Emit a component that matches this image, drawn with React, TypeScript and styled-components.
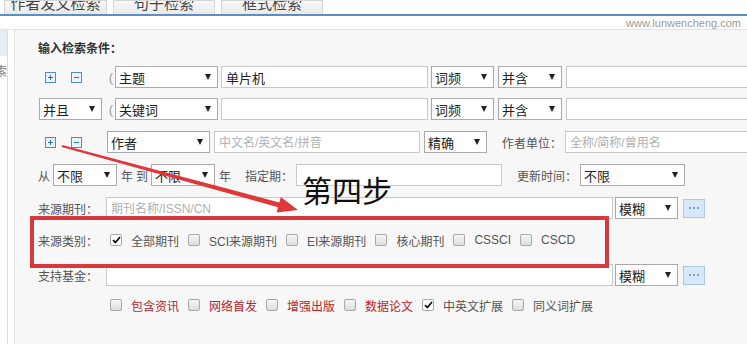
import React from 'react';
import styled, { createGlobalStyle } from 'styled-components';

const GlobalStyle = createGlobalStyle`
  html, body {
    margin: 0;
    padding: 0;
    background: #fff;
  }
  body {
    width: 747px;
    height: 344px;
    overflow: hidden;
    font-family: "Liberation Sans", "Noto Sans CJK SC", sans-serif;
    font-size: 12px;
    color: #555;
  }
`;

const Page = styled.div`
  position: relative;
  width: 747px;
  height: 344px;
  overflow: hidden;
  display: flex;
  flex-direction: column;
`;

const TabBar = styled.div`
  display: flex;
  gap: 6px;
  padding-left: 4px;
  height: 14px;
  border-bottom: 2px solid #5b8ec4;
`;

const Tab = styled.div<{ $w: number }>`
  width: ${p => p.$w}px;
  height: 14px;
  box-sizing: border-box;
  overflow: hidden;
  display: flex;
  align-items: flex-end;
  justify-content: center;
  background: linear-gradient(#f8f8f8, #e9e9e9);
  border: 1px solid #d6d6d6;
  border-bottom: none;
`;

const TabLabel = styled.span`
  font-size: 15px;
  line-height: 20px;
  color: #444;
  margin-bottom: 0;
  white-space: nowrap;
`;

const Strip = styled.div`
  height: 13px;
  border-bottom: 1px solid #e2e2e2;
  display: flex;
  justify-content: flex-end;
  align-items: center;
  padding-right: 6px;
  font-size: 11px;
  color: #9a9a9a;
`;

const Body = styled.div`
  flex: 1;
  display: flex;
  min-height: 0;
`;

const Sidebar = styled.div`
  width: 7px;
  border-right: 1px solid #d9dee5;
  overflow: hidden;
  display: flex;
  flex-direction: column;
`;

const SideHead = styled.div`
  height: 26px;
  background: #e8eef6;
`;

const SideText = styled.div`
  margin-top: 10px;
  line-height: 12px;
  display: flex;
  justify-content: flex-end;
  white-space: nowrap;
  color: #777;
`;

const Panel = styled.div`
  flex: 1;
  margin-left: 6px;
  background: #f7f7f7;
  border-left: 1px solid #e3e3e3;
  padding: 8px 0 0 23px;
  overflow: hidden;
`;

const Row = styled.div<{ $mt: number }>`
  display: flex;
  align-items: center;
  height: 22px;
  margin-top: ${p => p.$mt}px;
  white-space: nowrap;
`;

const Title = styled.div`
  font-weight: bold;
  color: #333;
  line-height: 22px;
  height: 22px;
`;

const Text = styled.span<{ $ml?: number; $w?: number }>`
  flex-shrink: 0;
  margin-left: ${p => p.$ml ?? 0}px;
  ${p => (p.$w ? `width: ${p.$w}px;` : '')}
  color: #555;
  font-size: 12px;
`;

const Paren = styled.span<{ $ml: number }>`
  flex-shrink: 0;
  width: 8px;
  margin-left: ${p => p.$ml}px;
  text-align: center;
  font-size: 13px;
  color: #999;
`;

const SelectBox = styled.div<{ $w: number; $ml?: number }>`
  flex-shrink: 0;
  box-sizing: border-box;
  width: ${p => p.$w}px;
  height: 22px;
  margin-left: ${p => p.$ml ?? 0}px;
  border: 1px solid #a9a9a9;
  background: #fff;
  display: flex;
  align-items: center;
  padding: 0 6px 0 3px;
  font-size: 13px;
  color: #222;
`;

const Caret = styled.span`
  margin-left: auto;
  width: 0;
  height: 0;
  border-left: 3px solid transparent;
  border-right: 3px solid transparent;
  border-top: 6px solid #222;
`;

const TextInput = styled.input<{ $w: number; $ml?: number }>`
  flex-shrink: 0;
  box-sizing: border-box;
  width: ${p => p.$w}px;
  height: 22px;
  margin: 0 0 0 ${p => p.$ml ?? 0}px;
  border: 1px solid #c9c9c9;
  background: #fff;
  padding: 0 4px;
  font-family: inherit;
  font-size: 13px;
  color: #222;
  outline: none;

  &::placeholder {
    font-size: 12px;
    color: #b0b0b0;
  }
`;

const MoreButton = styled.button<{ $ml: number }>`
  flex-shrink: 0;
  box-sizing: border-box;
  width: 22px;
  height: 19px;
  margin-left: ${p => p.$ml}px;
  padding: 0;
  border: 1px solid #a9c9e8;
  background: #d6e8f9;
  display: flex;
  align-items: center;
  justify-content: center;
  gap: 2px;
`;

const Dot = styled.span`
  width: 2px;
  height: 2px;
  background: #77a6d4;
`;

const IconButton = styled.span<{ $ml: number }>`
  flex-shrink: 0;
  display: inline-flex;
  margin-left: ${p => p.$ml}px;
`;

const CheckGroup = styled.div<{ $ml: number }>`
  display: flex;
  align-items: center;
  gap: 9px;
  margin-left: ${p => p.$ml}px;
`;

const CheckItem = styled.label`
  display: flex;
  align-items: center;
  gap: 9px;
`;

const Box = styled.span<{ $checked?: boolean }>`
  box-sizing: border-box;
  width: 12px;
  height: 12px;
  border: 1px solid #a8a8a8;
  border-radius: 2px;
  background: ${p => (p.$checked ? '#fff' : 'linear-gradient(#f6f6f6, #dedede)')};
  display: inline-flex;
  align-items: center;
  justify-content: center;
`;

const CheckText = styled.span<{ $red?: boolean }>`
  font-size: 12px;
  color: ${p => (p.$red ? '#b8262c' : '#555')};
`;

const Frame = styled.div`
  position: absolute;
  left: 30px;
  top: 216px;
  width: 579px;
  height: 52px;
  box-sizing: border-box;
  border: 4px solid #d8393c;
  pointer-events: none;
`;

const Arrow = styled.svg`
  position: absolute;
  left: 0;
  top: 0;
  pointer-events: none;
`;

const StepText = styled.div`
  position: absolute;
  left: 302px;
  top: 174px;
  font-family: "Noto Sans CJK SC", sans-serif;
  font-size: 30px;
  line-height: 1;
  color: #111;
`;

const SquareIcon: React.FC<{ plus?: boolean }> = ({ plus }) => (
  <svg width="11" height="11" viewBox="0 0 11 11">
    <rect x="0.5" y="0.5" width="10" height="10" fill="#eaf3fb" stroke="#4d8fc2" />
    <path d="M3 5.5h5" stroke="#2f6fa3" />
    {plus && <path d="M5.5 3v5" stroke="#2f6fa3" />}
  </svg>
);

const Select: React.FC<{ w: number; ml?: number; value: string }> = ({ w, ml, value }) => (
  <SelectBox $w={w} $ml={ml}>
    {value}
    <Caret />
  </SelectBox>
);

const Check: React.FC<{ label: string; checked?: boolean; red?: boolean }> = ({ label, checked, red }) => (
  <CheckItem>
    <Box $checked={checked}>
      {checked && (
        <svg width="9" height="8" viewBox="0 0 9 8">
          <path d="M1 4.2 3.4 6.5 8 1" fill="none" stroke="#111" strokeWidth="1.8" />
        </svg>
      )}
    </Box>
    <CheckText $red={red}>{label}</CheckText>
  </CheckItem>
);

const More: React.FC<{ ml: number }> = ({ ml }) => (
  <MoreButton $ml={ml}>
    <Dot />
    <Dot />
    <Dot />
  </MoreButton>
);

const sources = [
  { label: '全部期刊', checked: true },
  { label: 'SCI来源期刊' },
  { label: 'EI来源期刊' },
  { label: '核心期刊' },
  { label: 'CSSCI' },
  { label: 'CSCD' },
];

const extras = [
  { label: '包含资讯', red: true },
  { label: '网络首发', red: true },
  { label: '增强出版', red: true },
  { label: '数据论文', red: true },
  { label: '中英文扩展', checked: true },
  { label: '同义词扩展' },
];

const App: React.FC = () => {
  return (
    <>
      <GlobalStyle />
      <Page>
        <TabBar>
          <Tab $w={103}><TabLabel>作者发文检索</TabLabel></Tab>
          <Tab $w={102}><TabLabel>句子检索</TabLabel></Tab>
          <Tab $w={102}><TabLabel>框式检索</TabLabel></Tab>
        </TabBar>
        <Strip>www.lunwencheng.com</Strip>
        <Body>
          <Sidebar>
            <SideHead />
            <SideText>检索</SideText>
          </Sidebar>
          <Panel>
            <Title>输入检索条件：</Title>

            <Row $mt={6}>
              <IconButton $ml={7}><SquareIcon plus /></IconButton>
              <IconButton $ml={15}><SquareIcon /></IconButton>
              <Paren $ml={25}>(</Paren>
              <Select w={103} value="主题" />
              <TextInput $w={207} $ml={3} readOnly defaultValue="单片机" />
              <Select w={63} ml={3} value="词频" />
              <Select w={64} ml={4} value="并含" />
              <TextInput $w={200} $ml={4} readOnly />
            </Row>

            <Row $mt={10}>
              <Select w={63} ml={1} value="并且" />
              <Paren $ml={5}>(</Paren>
              <Select w={103} value="关键词" />
              <TextInput $w={207} $ml={3} readOnly />
              <Select w={63} ml={3} value="词频" />
              <Select w={64} ml={4} value="并含" />
              <TextInput $w={200} $ml={4} readOnly />
            </Row>

            <Row $mt={11}>
              <IconButton $ml={7}><SquareIcon plus /></IconButton>
              <IconButton $ml={15}><SquareIcon /></IconButton>
              <Select w={103} ml={25} value="作者" />
              <TextInput $w={206} $ml={4} readOnly placeholder="中文名/英文名/拼音" />
              <Select w={63} ml={4} value="精确" />
              <Text $ml={15}>作者单位：</Text>
              <TextInput $w={200} $ml={3} readOnly placeholder="全称/简称/曾用名" />
            </Row>

            <Row $mt={11}>
              <Text>从</Text>
              <Select w={64} ml={3} value="不限" />
              <Text $ml={4}>年</Text>
              <Text $ml={3}>到</Text>
              <Select w={64} ml={3} value="不限" />
              <Text $ml={4}>年</Text>
              <Text $ml={14}>指定期：</Text>
              <TextInput $w={206} $ml={3} readOnly />
              <Text $ml={15}>更新时间：</Text>
              <Select w={105} ml={3} value="不限" />
            </Row>

            <Row $mt={11}>
              <Text $w={60}>来源期刊：</Text>
              <TextInput $w={507} $ml={8} readOnly placeholder="期刊名称/ISSN/CN" />
              <Select w={63} ml={2} value="模糊" />
              <More ml={5} />
            </Row>

            <Row $mt={10}>
              <Text $w={60}>来源类别：</Text>
              <CheckGroup $ml={12}>
                {sources.map(s => (
                  <Check key={s.label} label={s.label} checked={s.checked} />
                ))}
              </CheckGroup>
            </Row>

            <Row $mt={13}>
              <Text $w={60}>支持基金：</Text>
              <TextInput $w={507} $ml={8} readOnly />
              <Select w={63} ml={2} value="模糊" />
              <More ml={5} />
            </Row>

            <Row $mt={8}>
              <CheckGroup $ml={72}>
                {extras.map(s => (
                  <Check key={s.label} label={s.label} checked={s.checked} red={s.red} />
                ))}
              </CheckGroup>
            </Row>
          </Panel>
        </Body>

        <Frame />
        <Arrow width="747" height="344" viewBox="0 0 747 344">
          <polygon
            points="62.3,145 279.4,202.4 280.8,197.1 298,210 276.6,212.5 278,207.2 61.7,147"
            fill="#e0373a"
          />
        </Arrow>
        <StepText>第四步</StepText>
      </Page>
    </>
  );
};

App.displayName = 'App';

export default App;
